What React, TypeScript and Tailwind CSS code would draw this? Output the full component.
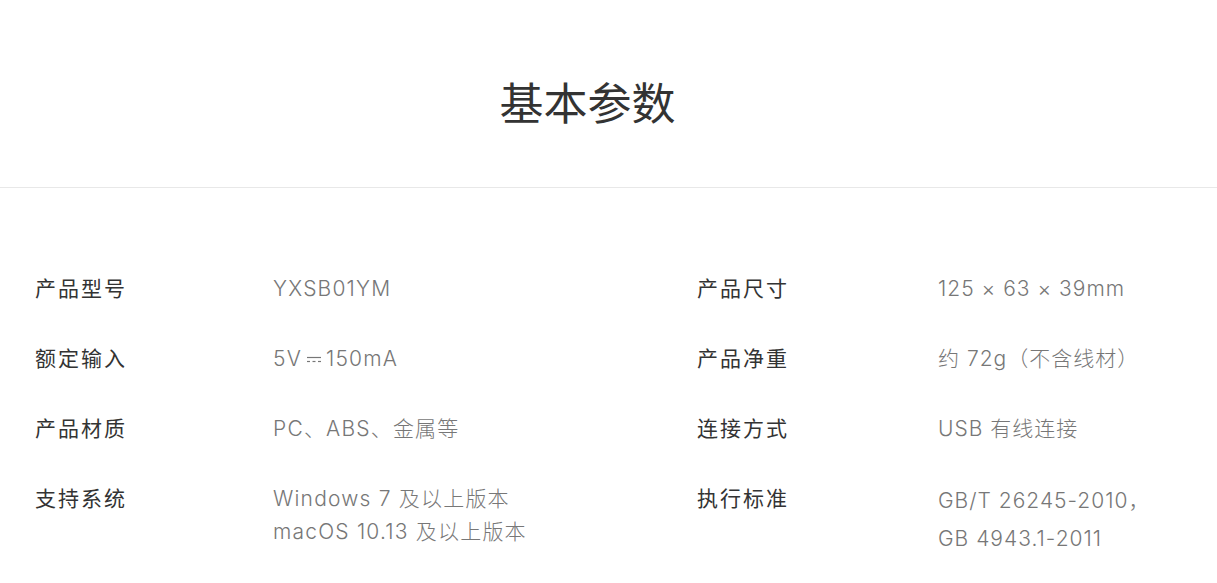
import type { ReactNode } from 'react'

function DcSymbol() {
  return (
    <svg
      className="mx-[5px] inline-block align-middle"
      width="14"
      height="8"
      viewBox="0 0 14 8"
    >
      <line x1="0" y1="1.5" x2="14" y2="1.5" stroke="currentColor" strokeWidth="1.2" />
      <line x1="0" y1="5.5" x2="3" y2="5.5" stroke="currentColor" strokeWidth="1.2" />
      <line x1="5.5" y1="5.5" x2="8.5" y2="5.5" stroke="currentColor" strokeWidth="1.2" />
      <line x1="11" y1="5.5" x2="14" y2="5.5" stroke="currentColor" strokeWidth="1.2" />
    </svg>
  )
}

type Spec = { label: string; value: ReactNode }

const left: Spec[] = [
  { label: '产品型号', value: 'YXSB01YM' },
  {
    label: '额定输入',
    value: (
      <>
        5V
        <DcSymbol />
        150mA
      </>
    ),
  },
  { label: '产品材质', value: 'PC、ABS、金属等' },
  {
    label: '支持系统',
    value: (
      <>
        Windows 7 及以上版本
        <br />
        macOS 10.13 及以上版本
      </>
    ),
  },
]

const right: Spec[] = [
  { label: '产品尺寸', value: '125 × 63 × 39mm' },
  { label: '产品净重', value: '约 72g（不含线材）' },
  { label: '连接方式', value: 'USB 有线连接' },
  {
    label: '执行标准',
    value: (
      <span className="block leading-[38px]">
        GB/T 26245-2010，
        <br />
        GB 4943.1-2011
      </span>
    ),
  },
]

export default function App() {
  const rows = left.map((l, i) => [l, right[i]] as const)

  return (
    <div className="min-h-screen bg-white font-['Inter','Noto_Sans_CJK_SC',sans-serif]">
      <header className="border-b border-[#e8e8e8] pt-[80px] pb-[59px]">
        <h1 className="w-[1175px] text-center text-[44px] leading-[48px] font-normal text-[#333]">
          基本参数
        </h1>
      </header>

      <section className="grid grid-cols-[238px_424px_241px_1fr] gap-y-[37px] pt-[84px] pl-[35px] text-[21px] leading-[33px]">
        {rows.map(([l, r]) => (
          <div key={l.label} className="contents">
            <div className="tracking-[2px] text-[#333]">{l.label}</div>
            <div className="font-light tracking-[1.2px] text-[#777]">{l.value}</div>
            <div className="tracking-[2px] text-[#333]">{r.label}</div>
            <div className="font-light tracking-[1px] text-[#777]">{r.value}</div>
          </div>
        ))}
      </section>
    </div>
  )
}
